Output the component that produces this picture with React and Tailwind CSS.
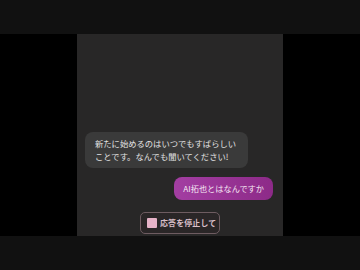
import React from 'react';

export default function App() {
  return (
    <div className="h-[270px] w-[360px] flex flex-col bg-black font-['Noto_Sans_CJK_JP','Noto_Sans',sans-serif]">
      {/* top bar */}
      <div className="h-[34px] bg-[#111111]" />

      <div className="flex-1 flex justify-center">
        <div className="w-[206px] bg-[#282727] flex flex-col justify-end pb-[2px]">
          {/* assistant message */}
          <div className="ml-[8px] w-[163px] rounded-[8px] bg-[#3a3a3a] pl-[10px] pr-[8px] py-[5px] text-[8.3px] leading-[13px] text-[#e2e2e2]">
            新たに始めるのはいつでもすばらしいことです。なんでも聞いてください!
          </div>

          {/* user message */}
          <div className="mt-[9px] mr-[10px] self-end rounded-[8px] bg-gradient-to-r from-[#a33ea2] to-[#8d2a88] px-[9px] h-[23px] flex items-center text-[8.2px] text-[#f4e6f2]">
            AI拓也とはなんですか
          </div>

          {/* stop button */}
          <div className="mt-[12px] self-center flex items-center gap-[3px] h-[22px] w-[80px] pl-[6px] rounded-[5px] border border-[#6e5c61] bg-[#2a2627]">
            <span className="w-[10px] h-[10px] bg-[#e6b3c8] rounded-[1px]" />
            <span className="text-[7.9px] font-bold text-[#d9bfc9] tracking-[0.2px]">応答を停止して</span>
          </div>
        </div>
      </div>

      {/* bottom bar */}
      <div className="h-[34px] bg-[#111111]" />
    </div>
  );
}
